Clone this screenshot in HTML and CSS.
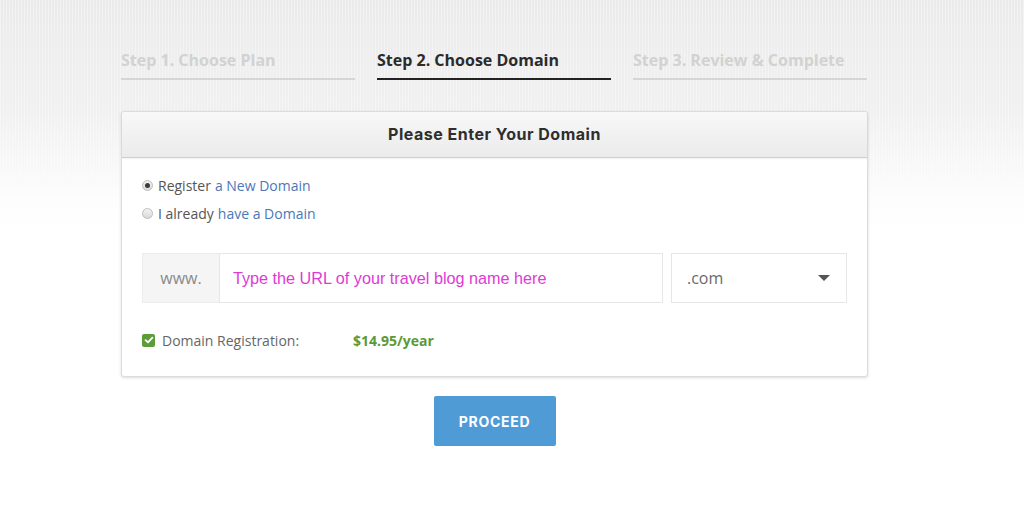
FILE: index.html
```html
<!DOCTYPE html>
<html lang="en">
<head>
<meta charset="utf-8">
<title>Choose Domain</title>
<link rel="stylesheet" href="styles.css">
</head>
<body>
<div class="page">
  <ol class="steps">
    <li class="step">Step 1. Choose Plan</li>
    <li class="step active">Step 2. Choose Domain</li>
    <li class="step">Step 3. Review &amp; Complete</li>
  </ol>

  <section class="card">
    <header class="card-head">Please Enter Your Domain</header>
    <div class="card-body">
      <label class="choice"><span class="radio checked"></span>Register <a href="#">a New Domain</a></label>
      <label class="choice"><span class="radio"></span>I already <a href="#">have a Domain</a></label>

      <div class="domain-row">
        <span class="addon">www.</span>
        <input class="domain-input" type="text" placeholder="Type the URL of your travel blog name here">
        <div class="tld">
          <span>.com</span>
          <span class="caret"></span>
        </div>
      </div>

      <div class="fee">
        <span class="check">
          <svg viewBox="0 0 12 12" width="12" height="12"><path d="M2.6 6.2 L5 8.4 L9.4 3.6" fill="none" stroke="#fff" stroke-width="1.8" stroke-linecap="round" stroke-linejoin="round"/></svg>
        </span>
        <span class="fee-label">Domain Registration:</span>
        <span class="fee-price">$14.95/year</span>
      </div>
    </div>
  </section>

  <div class="actions">
    <button class="proceed" type="button">PROCEED</button>
  </div>
</div>
</body>
</html>
```

FILE: styles.css
```css
html, body {
  margin: 0;
  padding: 0;
}

body {
  min-height: 505px;
  font-family: "Open Sans", "Liberation Sans", sans-serif;
  color: #555;
  background:
    repeating-linear-gradient(90deg, rgba(255,255,255,0.35) 0 1px, rgba(0,0,0,0) 1px 3px),
    linear-gradient(180deg, #ebebeb 0px, #f0f0f0 110px, #fdfdfd 200px, #ffffff 240px);
  background-size: 100% 240px, 100% 100%;
  background-repeat: no-repeat;
}

.page {
  width: 747px;
  margin-left: 121px;
  padding-top: 50px;
}

/* step indicator */
.steps {
  list-style: none;
  margin: 0;
  padding: 0;
  display: grid;
  grid-template-columns: 234px 234px 234px;
  column-gap: 22px;
}

.step {
  font-size: 16px;
  line-height: 20px;
  font-weight: 700;
  color: #d2d2d2;
  padding-bottom: 8px;
  border-bottom: 2px solid #d6d6d6;
  white-space: nowrap;
}

.step.active {
  color: #2b2b2b;
  border-bottom-color: #222;
}

/* domain card */
.card {
  margin-top: 31px;
  background: #fff;
  border: 1px solid #dcdcdc;
  border-radius: 3px;
  box-shadow: 0 1px 3px rgba(0,0,0,0.14);
}

.card-head {
  height: 45px;
  line-height: 45px;
  text-align: center;
  font-family: "Inter", "DejaVu Sans", sans-serif;
  font-weight: 700;
  font-size: 16px;
  letter-spacing: 0.5px;
  color: #2e2e2e;
  background: linear-gradient(180deg, #f8f8f8, #ebebeb);
  border-bottom: 1px solid #cfcfcf;
  border-radius: 3px 3px 0 0;
  box-shadow: 0 1px 2px rgba(0,0,0,0.06);
}

.card-body {
  padding: 13px 20px 26px 20px;
}

.choice {
  display: flex;
  align-items: center;
  height: 28px;
  font-size: 14px;
  color: #555;
}

.choice a {
  color: #4a78b8;
  text-decoration: none;
  margin-left: 4px;
}

.radio {
  width: 11px;
  height: 11px;
  box-sizing: border-box;
  border-radius: 50%;
  border: 1px solid #bdbdbd;
  background: linear-gradient(180deg, #f3f3f3, #d9d9d9);
  margin-right: 5px;
  position: relative;
}

.radio.checked::after {
  content: "";
  position: absolute;
  left: 2px;
  top: 2px;
  width: 5px;
  height: 5px;
  border-radius: 50%;
  background: #3a3a3a;
}

/* domain input row */
.domain-row {
  margin-top: 26px;
  display: flex;
  height: 50px;
}

.addon {
  width: 77px;
  box-sizing: border-box;
  display: flex;
  align-items: center;
  justify-content: center;
  background: #f5f5f5;
  border: 1px solid #ececec;
  border-right: none;
  font-size: 16px;
  color: #8a8a8a;
}

.domain-input {
  width: 444px;
  box-sizing: border-box;
  height: 50px;
  margin: 0;
  border: 1px solid #e6e6e6;
  padding: 0 13px;
  font-family: "Liberation Sans", Arial, sans-serif;
  font-size: 16.2px;
  outline: none;
  background: #fff;
}

.domain-input::placeholder {
  color: #e03ad6;
  opacity: 1;
}

.tld {
  width: 176px;
  box-sizing: border-box;
  margin-left: 8px;
  border: 1px solid #e6e6e6;
  display: flex;
  align-items: center;
  justify-content: space-between;
  padding: 0 16px 0 15px;
  font-size: 16px;
  color: #6a6a6a;
}

.caret {
  width: 0;
  height: 0;
  border-left: 6px solid transparent;
  border-right: 6px solid transparent;
  border-top: 6px solid #555;
}

/* fee line */
.fee {
  margin-top: 27px;
  display: flex;
  align-items: center;
  height: 20px;
  font-size: 14px;
}

.check {
  width: 13px;
  height: 13px;
  border-radius: 2px;
  background: #5c9d3a;
  display: flex;
  align-items: center;
  justify-content: center;
}

.fee-label {
  margin-left: 7px;
  width: 191px;
  color: #666;
}

.fee-price {
  font-weight: 700;
  color: #5a9a38;
}

/* action */
.actions {
  display: flex;
  justify-content: center;
  margin-top: 19px;
}

.proceed {
  width: 122px;
  height: 50px;
  border: none;
  border-radius: 2px;
  background: #4e9bd6;
  color: #fff;
  font-family: "Inter", "DejaVu Sans", sans-serif;
  font-weight: 700;
  font-size: 14px;
  letter-spacing: 0.7px;
  cursor: pointer;
}
```
